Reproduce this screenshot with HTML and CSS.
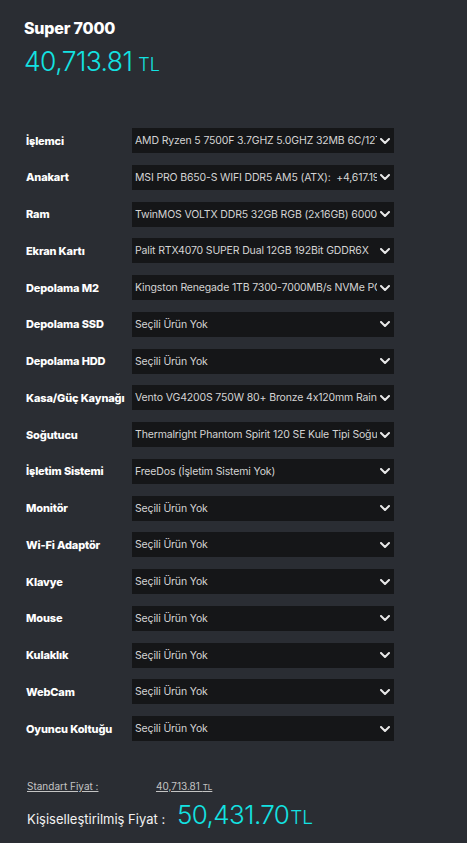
FILE: index.html
```html
<!DOCTYPE html>
<html lang="tr">
<head>
<meta charset="utf-8">
<link rel="stylesheet" href="styles.css">
</head>
<body>
<div class="page">
  <h1 class="title">Super 7000</h1>
  <div class="price"><span class="num">40,713.81</span><span class="cur">TL</span></div>

  <div class="rows">
    <div class="row"><div class="label">İşlemci</div><div class="sel"><span class="txt">AMD Ryzen 5 7500F 3.7GHZ 5.0GHZ 32MB 6C/12T</span><svg class="chev" viewBox="0 0 10 6"><path d="M1 1l4 4 4-4"/></svg></div></div>
    <div class="row"><div class="label">Anakart</div><div class="sel"><span class="txt">MSI PRO B650-S WIFI DDR5 AM5 (ATX): &nbsp;+4,617.19 <span class="blue">TL</span></span><svg class="chev" viewBox="0 0 10 6"><path d="M1 1l4 4 4-4"/></svg></div></div>
    <div class="row"><div class="label">Ram</div><div class="sel"><span class="txt">TwinMOS VOLTX DDR5 32GB RGB (2x16GB) 6000MHz</span><svg class="chev" viewBox="0 0 10 6"><path d="M1 1l4 4 4-4"/></svg></div></div>
    <div class="row"><div class="label">Ekran Kartı</div><div class="sel"><span class="txt">Palit RTX4070 SUPER Dual 12GB 192Bit GDDR6X</span><svg class="chev" viewBox="0 0 10 6"><path d="M1 1l4 4 4-4"/></svg></div></div>
    <div class="row"><div class="label">Depolama M2</div><div class="sel"><span class="txt">Kingston Renegade 1TB 7300-7000MB/s NVMe PCIe</span><svg class="chev" viewBox="0 0 10 6"><path d="M1 1l4 4 4-4"/></svg></div></div>
    <div class="row"><div class="label">Depolama SSD</div><div class="sel"><span class="txt">Seçili Ürün Yok</span><svg class="chev" viewBox="0 0 10 6"><path d="M1 1l4 4 4-4"/></svg></div></div>
    <div class="row"><div class="label">Depolama HDD</div><div class="sel"><span class="txt">Seçili Ürün Yok</span><svg class="chev" viewBox="0 0 10 6"><path d="M1 1l4 4 4-4"/></svg></div></div>
    <div class="row"><div class="label">Kasa/Güç Kaynağı</div><div class="sel"><span class="txt">Vento VG4200S 750W 80+ Bronze 4x120mm Rainbow</span><svg class="chev" viewBox="0 0 10 6"><path d="M1 1l4 4 4-4"/></svg></div></div>
    <div class="row"><div class="label">Soğutucu</div><div class="sel"><span class="txt">Thermalright Phantom Spirit 120 SE Kule Tipi Soğutucu</span><svg class="chev" viewBox="0 0 10 6"><path d="M1 1l4 4 4-4"/></svg></div></div>
    <div class="row"><div class="label">İşletim Sistemi</div><div class="sel"><span class="txt">FreeDos (İşletim Sistemi Yok)</span><svg class="chev" viewBox="0 0 10 6"><path d="M1 1l4 4 4-4"/></svg></div></div>
    <div class="row"><div class="label">Monitör</div><div class="sel"><span class="txt">Seçili Ürün Yok</span><svg class="chev" viewBox="0 0 10 6"><path d="M1 1l4 4 4-4"/></svg></div></div>
    <div class="row"><div class="label">Wi-Fi Adaptör</div><div class="sel"><span class="txt">Seçili Ürün Yok</span><svg class="chev" viewBox="0 0 10 6"><path d="M1 1l4 4 4-4"/></svg></div></div>
    <div class="row"><div class="label">Klavye</div><div class="sel"><span class="txt">Seçili Ürün Yok</span><svg class="chev" viewBox="0 0 10 6"><path d="M1 1l4 4 4-4"/></svg></div></div>
    <div class="row"><div class="label">Mouse</div><div class="sel"><span class="txt">Seçili Ürün Yok</span><svg class="chev" viewBox="0 0 10 6"><path d="M1 1l4 4 4-4"/></svg></div></div>
    <div class="row"><div class="label">Kulaklık</div><div class="sel"><span class="txt">Seçili Ürün Yok</span><svg class="chev" viewBox="0 0 10 6"><path d="M1 1l4 4 4-4"/></svg></div></div>
    <div class="row"><div class="label">WebCam</div><div class="sel"><span class="txt">Seçili Ürün Yok</span><svg class="chev" viewBox="0 0 10 6"><path d="M1 1l4 4 4-4"/></svg></div></div>
    <div class="row"><div class="label">Oyuncu Koltuğu</div><div class="sel"><span class="txt">Seçili Ürün Yok</span><svg class="chev" viewBox="0 0 10 6"><path d="M1 1l4 4 4-4"/></svg></div></div>
  </div>

  <div class="std">
    <a class="std-label">Standart Fiyat :</a>
    <a class="std-val">40,713.81 <small>TL</small></a>
  </div>
  <div class="custom">
    <span class="custom-label">Kişiselleştirilmiş Fiyat :</span>
    <span class="custom-price"><span class="num">50,431.70</span><span class="cur">TL</span></span>
  </div>
</div>
</body>
</html>
```

FILE: styles.css
```css
html, body {
  margin: 0;
  padding: 0;
  background: #2a2d33;
}
body {
  font-family: Inter, "Noto Sans", "DejaVu Sans", sans-serif;
  color: #fff;
  width: 467px;
  height: 843px;
  overflow: hidden;
}
.page {
  padding: 18px 0 0 24px;
}
.title {
  margin: 0;
  font-size: 16px;
  font-weight: 800;
  line-height: 20px;
  letter-spacing: -0.2px;
}
.price {
  margin-top: 8px;
  color: #13e2e2;
  display: flex;
  align-items: baseline;
  line-height: 30px;
}
.price .num {
  font-size: 26.5px;
  font-weight: 300;
  letter-spacing: -0.6px;
}
.price .cur {
  font-size: 18px;
  font-weight: 300;
  margin-left: 6px;
}
.rows {
  margin-top: 48px;
  display: flex;
  flex-direction: column;
  gap: 11.75px;
}
.row {
  display: flex;
  align-items: center;
  height: 25px;
}
.label {
  width: 108px;
  padding-left: 2px;
  box-sizing: border-box;
  font-size: 11px;
  font-weight: 800;
  letter-spacing: -0.15px;
  white-space: nowrap;
  overflow: hidden;
}
.sel {
  width: 262px;
  height: 25px;
  background: #151618;
  display: flex;
  align-items: center;
  padding: 0 4px 0 3px;
  box-sizing: border-box;
}
.txt {
  flex: 1;
  min-width: 0;
  font-size: 10.5px;
  color: #d4d4d4;
  white-space: nowrap;
  overflow: hidden;
  letter-spacing: -0.15px;
}
.blue { color: #2a7cd6; }
.chev {
  width: 10px;
  height: 6px;
  margin-left: 3px;
  flex: none;
}
.chev path {
  fill: none;
  stroke: #e8e8e8;
  stroke-width: 2;
  stroke-linecap: round;
  stroke-linejoin: round;
}
.std {
  margin-top: 38px;
  display: flex;
  padding-left: 3px;
  font-size: 10px;
  color: #c4c4c4;
  line-height: 14px;
}
.std a {
  text-decoration: underline;
  text-decoration-color: #c4c4c4;
}
.std-label { width: 129px; }
.std-val small { font-size: 8px; }
.custom {
  margin-top: 5px;
  display: flex;
  align-items: baseline;
  padding-left: 3px;
}
.custom-label {
  font-size: 13px;
  color: #f2f2f2;
  width: 150px;
}
.custom-price {
  color: #13e2e2;
  display: flex;
  align-items: baseline;
}
.custom-price .num {
  font-size: 26px;
  font-weight: 300;
  letter-spacing: -0.6px;
}
.custom-price .cur {
  font-size: 19px;
  font-weight: 300;
  margin-left: 1px;
}
```
